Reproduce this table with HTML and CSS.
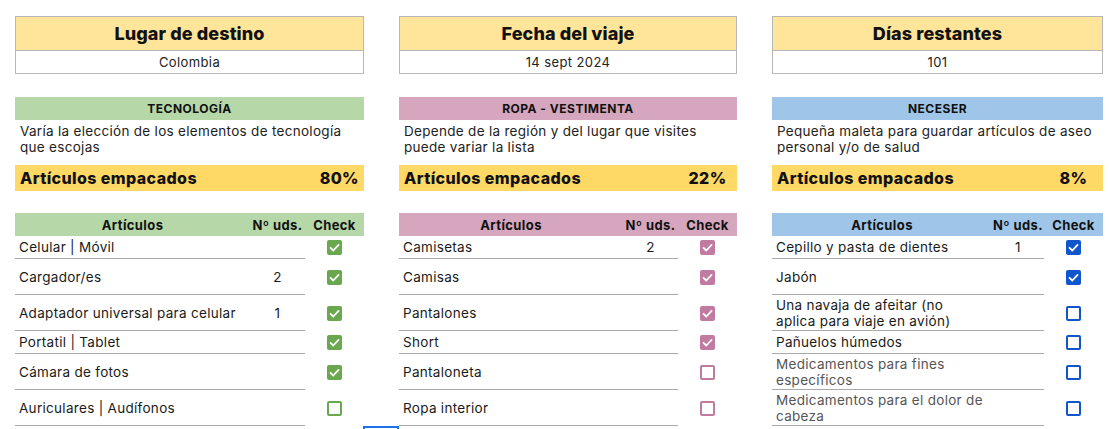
FILE: index.html
```html
<!DOCTYPE html>
<html lang="es">
<head>
<meta charset="utf-8">
<title>Lista de viaje</title>
<link rel="stylesheet" href="styles.css">
</head>
<body>
<div class="page">
  <div class="board">
    <!-- Column 1 -->
    <section class="col col-1 green">
      <div class="info">
        <div class="info-title">Lugar de destino</div>
        <div class="info-value">Colombia</div>
      </div>
      <div class="sec-head">TECNOLOGÍA</div>
      <div class="sec-desc">Varía la elección de los elementos de tecnología<br>que escojas</div>
      <div class="packed"><span class="packed-label">Artículos empacados</span><span class="packed-pct pct-right">80%</span></div>
      <div class="table">
        <div class="th th-item">Artículos</div><div class="th">Nº uds.</div><div class="th">Check</div>
        <div class="td item s">Celular | Móvil</div><div class="td qty s"></div><div class="td chk s"><span class="box on"><svg viewBox="0 0 14 14"><polyline points="3.3,7.3 5.9,9.8 10.8,4.6"/></svg></span></div>
        <div class="td item t">Cargador/es</div><div class="td qty t">2</div><div class="td chk t"><span class="box on"><svg viewBox="0 0 14 14"><polyline points="3.3,7.3 5.9,9.8 10.8,4.6"/></svg></span></div>
        <div class="td item t">Adaptador universal para celular</div><div class="td qty t">1</div><div class="td chk t"><span class="box on"><svg viewBox="0 0 14 14"><polyline points="3.3,7.3 5.9,9.8 10.8,4.6"/></svg></span></div>
        <div class="td item s">Portatil | Tablet</div><div class="td qty s"></div><div class="td chk s"><span class="box on"><svg viewBox="0 0 14 14"><polyline points="3.3,7.3 5.9,9.8 10.8,4.6"/></svg></span></div>
        <div class="td item t">Cámara de fotos</div><div class="td qty t"></div><div class="td chk t"><span class="box on"><svg viewBox="0 0 14 14"><polyline points="3.3,7.3 5.9,9.8 10.8,4.6"/></svg></span></div>
        <div class="td item t">Auriculares | Audífonos</div><div class="td qty t"></div><div class="td chk t"><span class="box"></span></div>
      </div>
    </section>

    <!-- Column 2 -->
    <section class="col col-2 pink">
      <div class="info">
        <div class="info-title">Fecha del viaje</div>
        <div class="info-value">14 sept 2024</div>
      </div>
      <div class="sec-head">ROPA - VESTIMENTA</div>
      <div class="sec-desc">Depende de la región y del lugar que visites<br>puede variar la lista</div>
      <div class="packed"><span class="packed-label">Artículos empacados</span><span class="packed-pct">22%</span></div>
      <div class="table">
        <div class="th th-item">Artículos</div><div class="th">Nº uds.</div><div class="th">Check</div>
        <div class="td item s">Camisetas</div><div class="td qty s">2</div><div class="td chk s"><span class="box on"><svg viewBox="0 0 14 14"><polyline points="3.3,7.3 5.9,9.8 10.8,4.6"/></svg></span></div>
        <div class="td item t">Camisas</div><div class="td qty t"></div><div class="td chk t"><span class="box on"><svg viewBox="0 0 14 14"><polyline points="3.3,7.3 5.9,9.8 10.8,4.6"/></svg></span></div>
        <div class="td item t">Pantalones</div><div class="td qty t"></div><div class="td chk t"><span class="box on"><svg viewBox="0 0 14 14"><polyline points="3.3,7.3 5.9,9.8 10.8,4.6"/></svg></span></div>
        <div class="td item s">Short</div><div class="td qty s"></div><div class="td chk s"><span class="box on"><svg viewBox="0 0 14 14"><polyline points="3.3,7.3 5.9,9.8 10.8,4.6"/></svg></span></div>
        <div class="td item t">Pantaloneta</div><div class="td qty t"></div><div class="td chk t"><span class="box"></span></div>
        <div class="td item t">Ropa interior</div><div class="td qty t"></div><div class="td chk t"><span class="box"></span></div>
      </div>
    </section>

    <!-- Column 3 -->
    <section class="col col-3 blue">
      <div class="info">
        <div class="info-title">Días restantes</div>
        <div class="info-value">101</div>
      </div>
      <div class="sec-head">NECESER</div>
      <div class="sec-desc">Pequeña maleta para guardar artículos de aseo<br>personal y/o de salud</div>
      <div class="packed"><span class="packed-label">Artículos empacados</span><span class="packed-pct">8%</span></div>
      <div class="table">
        <div class="th th-item">Artículos</div><div class="th">Nº uds.</div><div class="th">Check</div>
        <div class="td item s">Cepillo y pasta de dientes</div><div class="td qty s">1</div><div class="td chk s"><span class="box on"><svg viewBox="0 0 14 14"><polyline points="3.3,7.3 5.9,9.8 10.8,4.6"/></svg></span></div>
        <div class="td item t">Jabón</div><div class="td qty t"></div><div class="td chk t"><span class="box on"><svg viewBox="0 0 14 14"><polyline points="3.3,7.3 5.9,9.8 10.8,4.6"/></svg></span></div>
        <div class="td item t multi">Una navaja de afeitar (no<br>aplica para viaje en avión)</div><div class="td qty t"></div><div class="td chk t"><span class="box"></span></div>
        <div class="td item s">Pañuelos húmedos</div><div class="td qty s"></div><div class="td chk s"><span class="box"></span></div>
        <div class="td item t multi muted">Medicamentos para fines<br>específicos</div><div class="td qty t"></div><div class="td chk t"><span class="box"></span></div>
        <div class="td item t multi muted">Medicamentos para el dolor de<br>cabeza</div><div class="td qty t"></div><div class="td chk t"><span class="box"></span></div>
      </div>
    </section>
  </div>
  <div class="selection"></div>
</div>
</body>
</html>
```

FILE: styles.css
```css
* { box-sizing: border-box; }
html, body { margin: 0; padding: 0; background: #fff; }
body {
  font-family: "Inter", "Open Sans", "DejaVu Sans", sans-serif;
  color: #111;
  width: 1109px;
  height: 429px;
  overflow: hidden;
}
.page { position: relative; padding: 16px 0 0 15px; height: 429px; }
.board {
  display: grid;
  grid-template-columns: 349px 338px 331px;
  column-gap: 35px;
  align-items: start;
}
.col { display: flex; flex-direction: column; }

/* info box */
.info { border: 1px solid #b7b7b7; }
.info-title {
  background: #ffe599;
  height: 34px;
  display: flex; align-items: center; justify-content: center;
  font-weight: 800; font-size: 18px; color: #111;
  border-bottom: 1px solid #b7b7b7;
  letter-spacing: 0.1px;
}
.info-value {
  height: 22px;
  display: flex; align-items: center; justify-content: center;
  font-size: 13px; letter-spacing: 0.4px; color: #222;
}

/* section */
.sec-head {
  margin-top: 23px;
  height: 23px;
  display: flex; align-items: center; justify-content: center;
  font-weight: 700; font-size: 12px; letter-spacing: 0.5px; color: #111;
}
.green .sec-head, .green .th { background: #b6d7a8; }
.pink .sec-head, .pink .th { background: #d5a6bd; }
.blue .sec-head, .blue .th { background: #9fc5e8; }

.sec-desc {
  height: 45px;
  padding: 3px 5px 0;
  font-size: 13.5px; line-height: 16px; letter-spacing: 0.3px; color: #222;
  white-space: nowrap;
}

.packed {
  height: 26px;
  background: #ffd966;
  display: flex; align-items: center;
  font-weight: 800; font-size: 16px; letter-spacing: 0.4px; color: #111;
}
.packed-label { flex: 1; padding-left: 5px; }
.packed-pct { width: 59px; text-align: center; }
.packed-pct.pct-right { width: auto; padding-right: 5px; text-align: right; }

/* table */
.table {
  margin-top: 22px;
  display: grid;
}
.col-1 .table { grid-template-columns: 235px 55px 59px; }
.col-2 .table { grid-template-columns: 224px 55px 59px; }
.col-3 .table { grid-template-columns: 220px 52px 59px; }
.th {
  height: 23px;
  display: flex; align-items: center; justify-content: center;
  font-weight: 700; font-size: 13px; letter-spacing: 0.4px; color: #111;
  white-space: nowrap;
}
.td {
  display: flex; align-items: center;
  font-size: 13.5px; letter-spacing: 0.3px; color: #1a1a1a;
  white-space: nowrap;
}
.td.s { height: 23px; }
.td.t { height: 36px; }
.item { padding-left: 4px; line-height: 16px; }
.item, .qty { border-bottom: 1px solid #a9a9a9; }
.qty { justify-content: center; }
.chk { justify-content: center; }
.muted { color: #555; }

.box {
  width: 15px; height: 15px;
  border-radius: 2px;
  border: 2px solid currentColor;
  display: inline-flex; align-items: center; justify-content: center;
  background: #fff;
}
.box svg { width: 15px; height: 15px; flex: none; }
.box polyline { fill: none; stroke: #fff; stroke-width: 1.7; stroke-linecap: round; stroke-linejoin: round; }
.box.on { background: currentColor; border: none; }
.green .box { color: #6aa84f; }
.pink .box { color: #c27ba0; }
.blue .box { color: #1155cc; }

.selection {
  position: absolute;
  left: 363px; top: 426px;
  width: 36px; height: 10px;
  border: 2px solid #1a73e8;
}
```
